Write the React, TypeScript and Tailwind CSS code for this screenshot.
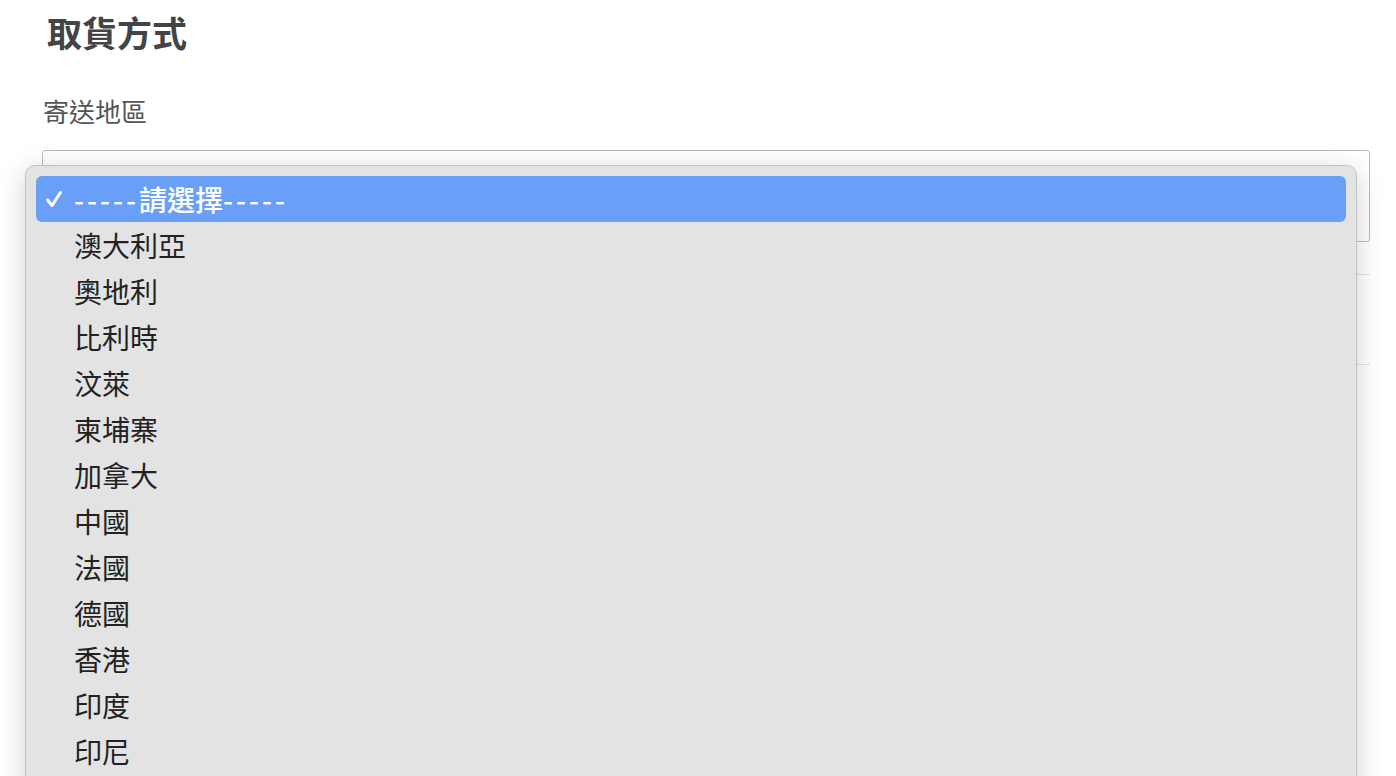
import React from 'react'

const countries = [
  '澳大利亞',
  '奧地利',
  '比利時',
  '汶萊',
  '柬埔寨',
  '加拿大',
  '中國',
  '法國',
  '德國',
  '香港',
  '印度',
  '印尼',
]

const font = { fontFamily: '"Noto Sans CJK TC", "Noto Sans", sans-serif' }

export default function App() {
  return (
    <div className="relative h-[776px] w-[1396px] overflow-hidden bg-white" style={font}>
      <div className="pl-[42px] pr-[26px] pt-[8px]">
        <h2 className="pl-[5px] text-[35px] font-bold leading-[48px] text-[#444]">取貨方式</h2>
        <label className="mt-[39px] block pl-[1px] text-[26px] leading-[32px] text-[#555]">寄送地區</label>
        {/* select box under the opened list */}
        <div className="mt-[23px] h-[92px] rounded-[3px] border border-[#bcbcbc] bg-white"></div>
        <div className="mt-[32px] border-t border-[#e2e2e2]"></div>
        <div className="mt-[89px] border-t border-[#e2e2e2]"></div>
      </div>

      {/* native dropdown list */}
      <div className="absolute left-[25px] top-[165px] h-[640px] w-[1332px] rounded-[10px] border border-[#c2c2c2] bg-[#e3e3e3] px-[10px] pt-[10px] shadow-[0_6px_28px_rgba(0,0,0,0.18)]">
        <div className="flex h-[46px] items-center rounded-[6px] bg-[#6a9ff8] text-white">
          <svg width="18" height="18" viewBox="0 0 18 18" className="ml-[9px] mr-[11px]">
            <path d="M2.5 10 L7 15.5 L15.5 2.5" fill="none" stroke="white" strokeWidth="3" strokeLinecap="round" strokeLinejoin="round" />
          </svg>
          <span className="text-[28px] font-medium leading-none">
            <span className="tracking-[3px]">-----</span>請選擇<span className="tracking-[3px]">-----</span>
          </span>
        </div>
        {countries.map((c) => (
          <div key={c} className="flex h-[46px] items-center pl-[38px] text-[28px] leading-none text-[#222]">
            {c}
          </div>
        ))}
      </div>
    </div>
  )
}
